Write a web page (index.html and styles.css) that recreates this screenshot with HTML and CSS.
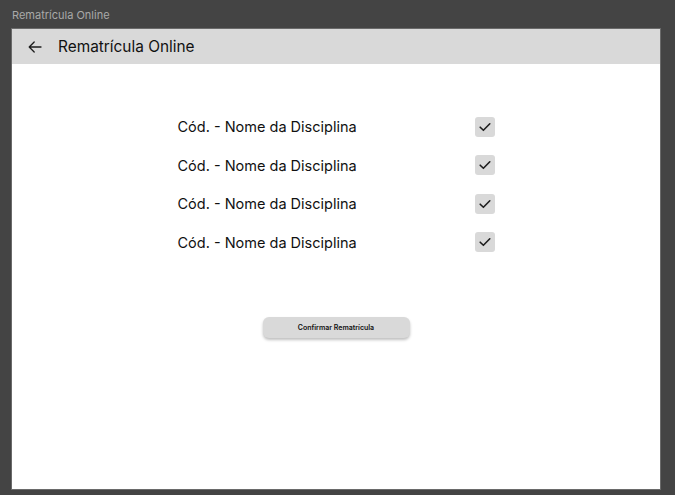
FILE: index.html
```html
<!DOCTYPE html>
<html lang="pt">
<head>
<meta charset="utf-8">
<link rel="stylesheet" href="styles.css">
</head>
<body>
<div class="page-label">Rematrícula Online</div>
<div class="frame">
  <header class="appbar">
    <svg class="back" width="14" height="12" viewBox="0 0 14 12" fill="none" stroke="#1d1d1d" stroke-width="1.3" stroke-linecap="round" stroke-linejoin="round">
      <path d="M13 6H1.2M6.2 1L1.2 6l5 5"/>
    </svg>
    <h1 class="title">Rematrícula Online</h1>
  </header>
  <main class="content">
    <ul class="list">
      <li class="row"><span class="name">Cód. - Nome da Disciplina</span><span class="check"><svg width="12" height="10" viewBox="0 0 12 10" fill="none" stroke="#1d1d1d" stroke-width="1.6" stroke-linecap="round" stroke-linejoin="round"><path d="M1.2 5.2l3.2 3.1L10.8 1.8"/></svg></span></li>
      <li class="row"><span class="name">Cód. - Nome da Disciplina</span><span class="check"><svg width="12" height="10" viewBox="0 0 12 10" fill="none" stroke="#1d1d1d" stroke-width="1.6" stroke-linecap="round" stroke-linejoin="round"><path d="M1.2 5.2l3.2 3.1L10.8 1.8"/></svg></span></li>
      <li class="row"><span class="name">Cód. - Nome da Disciplina</span><span class="check"><svg width="12" height="10" viewBox="0 0 12 10" fill="none" stroke="#1d1d1d" stroke-width="1.6" stroke-linecap="round" stroke-linejoin="round"><path d="M1.2 5.2l3.2 3.1L10.8 1.8"/></svg></span></li>
      <li class="row"><span class="name">Cód. - Nome da Disciplina</span><span class="check"><svg width="12" height="10" viewBox="0 0 12 10" fill="none" stroke="#1d1d1d" stroke-width="1.6" stroke-linecap="round" stroke-linejoin="round"><path d="M1.2 5.2l3.2 3.1L10.8 1.8"/></svg></span></li>
    </ul>
    <button class="confirm">Confirmar Rematrícula</button>
  </main>
</div>
</body>
</html>
```

FILE: styles.css
```css
* { box-sizing: border-box; }
html, body { margin: 0; padding: 0; }
body {
  background: #444444;
  font-family: Inter, "Noto Sans", sans-serif;
  width: 675px;
  height: 495px;
  overflow: hidden;
}
.page-label {
  height: 29px;
  padding: 9px 0 0 12px;
  font-size: 11px;
  line-height: 12px;
  color: #a9a9a9;
}
.frame {
  margin-left: 12px;
  width: 648px;
  height: 460px;
  background: #ffffff;
  box-shadow: 0 0 0 1px #6a6a6a;
  display: flex;
  flex-direction: column;
}
.appbar {
  height: 35px;
  background: #d9d9d9;
  display: flex;
  align-items: center;
  padding-left: 16px;
}
.back { display: block; margin-top: 1px; }
.title {
  margin: 0 0 0 16px;
  font-size: 15.4px;
  font-weight: 400;
  color: #111;
  line-height: 20px;
}
.content {
  display: flex;
  flex-direction: column;
  align-items: center;
  padding-top: 43.5px;
}
.list {
  list-style: none;
  margin: 0;
  padding: 0;
  width: 317px;
}
.row {
  height: 38.5px;
  display: flex;
  align-items: center;
  justify-content: space-between;
}
.name {
  font-size: 14.5px;
  color: #111;
}
.check {
  width: 20px;
  height: 20px;
  border-radius: 3px;
  background: #d9d9d9;
  display: flex;
  align-items: center;
  justify-content: center;
}
.check svg { display: block; }
.confirm {
  margin-top: 55px;
  width: 147px;
  height: 21px;
  border: none;
  border-radius: 6px;
  background: #d9d9d9;
  box-shadow: 0 2px 3px rgba(0,0,0,0.25);
  font-family: Inter, "Noto Sans", sans-serif;
  font-size: 7px;
  font-weight: 600;
  color: #111;
  padding: 0;
}
```
